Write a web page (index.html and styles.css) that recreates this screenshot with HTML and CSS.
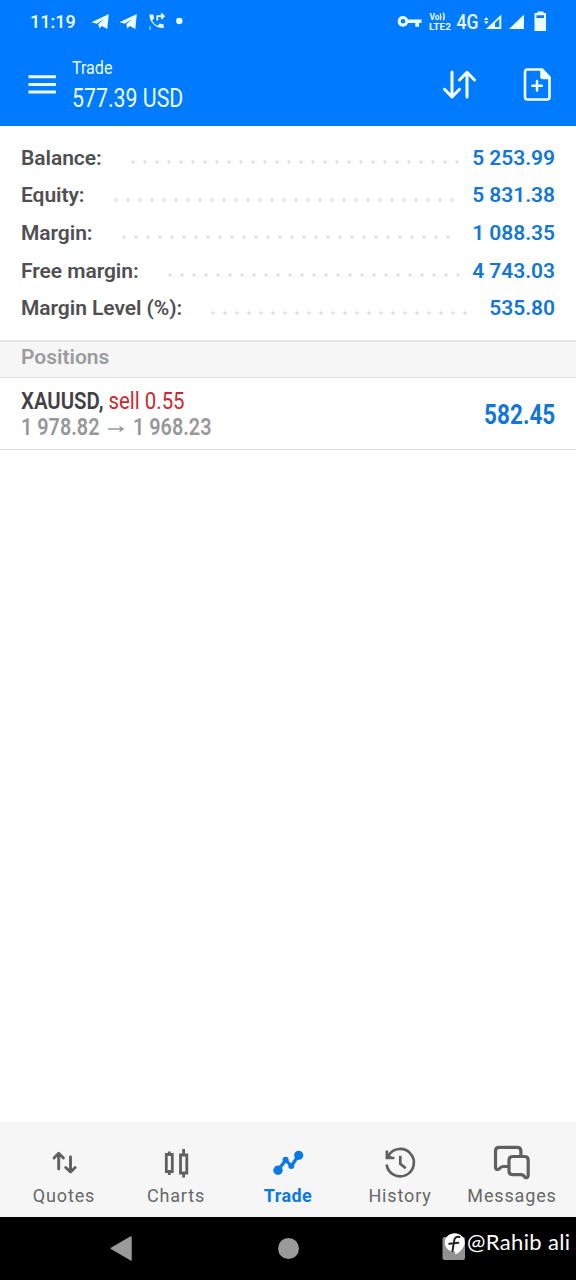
FILE: index.html
```html
<!DOCTYPE html>
<html lang="en">
<head>
<meta charset="utf-8">
<meta name="viewport" content="width=device-width">
<title>Trade</title>
<link rel="stylesheet" href="styles.css">
</head>
<body>
<div class="screen">
  <header class="top">
    <div class="status">
      <span class="clock">11:19</span>
      <svg class="status-left" width="96" height="24" viewBox="88 10 96 24" fill="#e9fdff">
        <path d="M91.500 22.300 108.800 14.100 107.300 28.900 101.800 25.900 99.300 28.600 98.300 24.300 104 19 96.800 23.800Z"/>
        <path d="M119.500 22.300 136.800 14.100 135.300 28.900 129.800 25.900 127.300 28.600 126.300 24.300 132 19 124.800 23.800Z"/>
        <path d="M149.500 14.500h3.800l.8 4-2 2c1.400 2.600 3 4.200 5.600 5.300l2-2.200 4 .8v3.600c-7.700.5-14.600-5.600-14.200-13.500Z"/>
        <path d="M157.300 20.500v-4.300h6M161.200 13.500l2.700 2.700-2.700 2.700" fill="none" stroke="#e9fdff" stroke-width="1.800"/>
        <path d="M149.500 26h1.200v4h-1.200z" opacity=".7"/>
        <circle cx="179.300" cy="21" r="3.200"/>
      </svg>
      <svg class="status-right" width="154" height="24" viewBox="396 10 154 24" fill="#e9fdff">
        <path fill-rule="evenodd" d="M403 16a5.300 5.300 0 0 1 5 3.500h13.500v3.600H419v3.700h-3.700v-3.700H408A5.300 5.300 0 1 1 403 16Zm0 3a2.300 2.300 0 1 0 0 4.600 2.300 2.300 0 0 0 0-4.600Z"/>
        <text x="429.500" y="19.500" class="volte" textLength="10" lengthAdjust="spacingAndGlyphs">Vo</text>
        <path d="M440.300 13.500q1.300 3.200 0 6.500M443.300 12.500q1.800 4 0 8" fill="none" stroke="#e9fdff" stroke-width="1.300"/>
        <text x="429" y="30" class="volte" textLength="22" lengthAdjust="spacingAndGlyphs">LTE2</text>
        <text x="456.500" y="28.500" class="network" textLength="22" lengthAdjust="spacingAndGlyphs">4G</text>
        <path d="M484 20l2.300-3 2.300 3zM484 21.300h4.600l-2.300 3z"/>
        <path fill-rule="evenodd" d="M486 29 501.300 14.500V29ZM495 27h4.300v-8.200L495 23Z"/>
        <path d="M509 29 524 14.500V29Z"/>
        <path fill-rule="evenodd" d="M537.500 11.500h6V13h2.500v18h-11.500V13h3ZM536.500 15.300v2.600h7.500v-2.600Z"/>
      </svg>
    </div>
    <div class="bar">
      <svg class="menu" width="28" height="22" viewBox="28 74 28 22" fill="#e9fdff"><path d="M28.500 75.200h27.500v3H28.500zM28.500 83h27.500v3H28.500zM28.500 90.500h27.500v3H28.500z"/></svg>
      <div class="heading">
        <div class="title"><span class="condensed">Trade</span></div>
        <div class="profit"><span class="condensed">577.39 USD</span></div>
      </div>
      <svg class="sort" width="36" height="32" viewBox="442 69 36 32" fill="none" stroke="#f4ffff" stroke-width="3" stroke-linecap="round" stroke-linejoin="round"><path d="M452 72v25M444.500 89.300 452 97l7.500-7.700M467 97V72.300M459.500 80l7.500-7.700 7.500 7.700"/></svg>
      <svg class="new-order" width="30" height="36" viewBox="522 67 30 36" fill="none" stroke="#f4ffff" stroke-width="2.600" stroke-linejoin="round" stroke-linecap="round"><path d="M527.500 69.500H542l7.500 8V97q0 2.500-2.500 2.500h-19.500q-2.500 0-2.500-2.500V72q0-2.500 2.500-2.500Z"/><path d="M541.500 70v6.500q0 1.500 1.500 1.500h6.500Z" fill="#f4ffff"/><path d="M537 81v9.500M532.300 85.800h9.500" stroke-width="2.500"/></svg>
    </div>
  </header>

  <main class="content">
    <section class="account">
      <div class="row balance"><span class="label">Balance:</span><span class="dots"></span><span class="value">5 253.99</span></div>
      <div class="row equity"><span class="label">Equity:</span><span class="dots"></span><span class="value">5 831.38</span></div>
      <div class="row margin"><span class="label">Margin:</span><span class="dots"></span><span class="value">1 088.35</span></div>
      <div class="row free"><span class="label">Free margin:</span><span class="dots"></span><span class="value">4 743.03</span></div>
      <div class="row level"><span class="label">Margin Level (%):</span><span class="dots"></span><span class="value">535.80</span></div>
    </section>
    <h2 class="section-title">Positions</h2>
    <section class="position">
      <div class="deal">
        <div class="symbol"><span class="condensed"><b>XAUUSD,</b> <span class="sell">sell 0.55</span></span></div>
        <div class="prices"><span class="condensed">1 978.82</span><svg width="17" height="10" viewBox="0 0 17 10" fill="none" stroke="#98989b" stroke-width="1.500"><path d="M0 5h14"/><path d="M11 1.500 16.500 5 11 8.500l1.500-3.500Z" fill="#98989b" stroke="none"/></svg><span class="condensed">1 968.23</span></div>
      </div>
      <div class="result"><span class="condensed">582.45</span></div>
    </section>
  </main>

  <nav class="tabs">
    <a class="tab"><svg width="40" height="40" viewBox="44 1143 40 40" fill="none" stroke="#606060" stroke-width="2.900" stroke-linecap="round" stroke-linejoin="round"><path d="M58.700 1169v-15M54 1158l4.700-4.700 4.700 4.700M70.500 1157v14.500M65.700 1167.500l4.800 4.500 4.700-4.500"/></svg><span>Quotes</span></a>
    <a class="tab"><svg width="40" height="40" viewBox="156 1143 40 40" fill="none" stroke="#606060" stroke-width="2.800"><path d="M166.300 1154.500h6v17h-6zM169.300 1151.500v3M169.300 1171.500v3.500M180.500 1155h6.300v18h-6.300zM183.600 1149v6M183.600 1173v4.500"/></svg><span>Charts</span></a>
    <a class="tab active"><svg width="40" height="40" viewBox="268 1143 40 40" fill="#0b79e5" stroke="#0b79e5" stroke-linejoin="round"><path d="M278 1170.300 285.800 1160 291.300 1166 298.700 1155.300" fill="none" stroke-width="3.300"/><g stroke="none"><circle cx="278" cy="1170.300" r="4.700"/><circle cx="285.600" cy="1159.700" r="3"/><circle cx="291.300" cy="1166" r="3"/><circle cx="298.700" cy="1155.300" r="4.600"/></g></svg><span>Trade</span></a>
    <a class="tab"><svg width="40" height="40" viewBox="380 1143 40 40" fill="none" stroke="#606060" stroke-width="2.700"><path d="M386.600 1164.500A13.700 13.700 0 1 0 388.500 1155.500"/><path d="M386.900 1150.500v7.500h7.500"/><path d="M387 1152.500v5.500h6Z" fill="#606060" stroke="none"/><path d="M400.300 1155.800v8l5.500 4.500"/></svg><span>History</span></a>
    <a class="tab"><svg width="40" height="40" viewBox="492 1143 40 40" fill="none" stroke="#606060" stroke-width="3.200" stroke-linejoin="round"><path d="M508.500 1166.500h-5.300q-2.200 0-4.200 2.500-3.500 1.500-3.500-2v-16q0-3.700 3.700-3.700h18q3.700 0 3.700 3.700v5"/><path d="M512.700 1156.500h11.800q3.700 0 3.700 3.700v15q0 3.500-3.200 2.200-1.300-2.700-4-2.700h-8.300q-3.700 0-3.700-3.700v-10.800q0-3.700 3.700-3.700Z"/></svg><span>Messages</span></a>
  </nav>

  <footer class="system">
    <svg class="back" width="24" height="28" viewBox="109 1234 24 28"><path d="M111.300 1248.300 131 1237v22.900Z" fill="#9a9a9a" stroke="#9a9a9a" stroke-width="1.500" stroke-linejoin="round"/></svg>
    <span class="home"></span>
    <div class="credit">
      <svg width="24" height="28" viewBox="442 1232 24 28"><rect x="442.500" y="1237" width="22.500" height="23" rx="2" fill="#929292"/><path d="M454.700 1233.200c5.600 0 10 4 10 9.300 0 4.500-4 9.500-9.500 12v-2.800c-6 .2-10.400-3.600-10.400-9.200 0-5.300 4.300-9.300 9.900-9.300Z" fill="#fff"/><path d="M459.500 1237c-3.300-1-5 .8-5.400 3.900l-1.600 10.100M449.300 1243.800l9-1" fill="none" stroke="#222" stroke-width="2" stroke-linecap="round"/></svg>
      <span>@Rahib ali</span>
    </div>
  </footer>
</div>
</body>
</html>
```
FILE: styles.css
```css
* { box-sizing: border-box; }
body { margin: 0; background: #fff; font-family: Roboto, "Noto Sans", sans-serif; }
svg { display: block; flex: none; }
.screen { width: 576px; height: 1280px; display: flex; flex-direction: column; overflow: hidden; }
.condensed { display: inline-block; transform: scaleX(.867); transform-origin: left center; white-space: nowrap; }

.top { height: 126px; background: #007aff; color: #ecfdff; }
.status { height: 44px; display: flex; align-items: center; padding-left: 30px; }
.clock { width: 58px; font-size: 18px; font-weight: 500; line-height: 24px; }
.status-right { margin-left: 212px; }
.volte { font-size: 9px; font-weight: 700; }
.network { font-size: 20.500px; font-weight: 500; }
.bar { height: 82px; display: flex; padding-left: 28px; }
.menu { margin-top: 30px; }
.heading { width: 370px; margin-left: 16px; padding-top: 13px; }
.title { font-size: 18.500px; line-height: 22px; }
.profit { font-size: 25px; line-height: 30px; margin-top: 5px; }
.profit .condensed { transform: scaleX(.853); }
.sort { margin-top: 25px; }
.new-order { margin: 23px 0 0 44px; }

.content { flex: 1; }
.account { height: 214px; padding: 13px 21px 0; }
.row { height: 37.600px; display: flex; align-items: center; font-size: 21px; font-weight: 600; line-height: 28px; letter-spacing: -.05px; white-space: nowrap; }
.label { color: #505053; }
.dots { height: 4px; margin-top: 9px; background: radial-gradient(circle at 6px 2px, #e0e0e2 1.200px, transparent 2px) 0 0 / 12px 4px repeat-x; }
.value { margin-left: auto; color: #1477d6; }
.balance .label { width: 105.500px; }
.balance .dots { width: 336px; }
.equity .label { width: 88.500px; }
.equity .dots { width: 348px; }
.margin .label { width: 96.500px; }
.margin .dots { width: 336px; }
.free .label { width: 143px; }
.free .dots { width: 300px; }
.level .label { width: 185.500px; }
.level .dots { width: 264px; }
.section-title { height: 38px; margin: 0; padding: 0 21px; border-top: 2px solid #e4e4e4; border-bottom: 1px solid #dfdfdf; background: #f6f6f6; color: #9c9c9f; font-size: 21px; font-weight: 600; line-height: 30px; }
.position { height: 72px; display: flex; justify-content: space-between; padding: 10px 21px 0; border-bottom: 1px solid #dedede; }
.symbol { height: 26px; font-size: 23.500px; line-height: 27px; color: #424246; }
.symbol b { font-weight: 600; }
.sell { color: #c92a30; }
.prices { height: 26px; display: flex; align-items: center; font-size: 23.500px; font-weight: 600; line-height: 26px; color: #98989b; }
.prices .condensed { transform: scaleX(.843); }
.prices svg { margin: 4px 8px 0 -6px; }
.result { font-size: 27px; font-weight: 700; line-height: 54px; color: #1477d6; }
.result .condensed { transform: scaleX(.835); transform-origin: right center; }

.tabs { height: 95px; display: grid; grid-template-columns: repeat(5, 112px); padding: 21px 8px 0; background: #f6f6f6; }
.tab { display: flex; flex-direction: column; align-items: center; color: #686868; font-size: 18px; line-height: 26px; letter-spacing: .85px; }
.active { color: #0b79e5; font-weight: 700; letter-spacing: .4px; }
.system { height: 63px; display: flex; background: #000; }
.back { margin: 17px 0 0 109px; }
.home { width: 21px; height: 21px; margin: 21px 0 0 145px; border-radius: 50%; background: #9a9a9a; }
.credit { display: flex; margin: 15px 0 0 143px; color: #fff; font: 22px/24px Lato, sans-serif; white-space: nowrap; letter-spacing: .35px; }
.credit span { margin: -2px 0 0 1px; }
```
